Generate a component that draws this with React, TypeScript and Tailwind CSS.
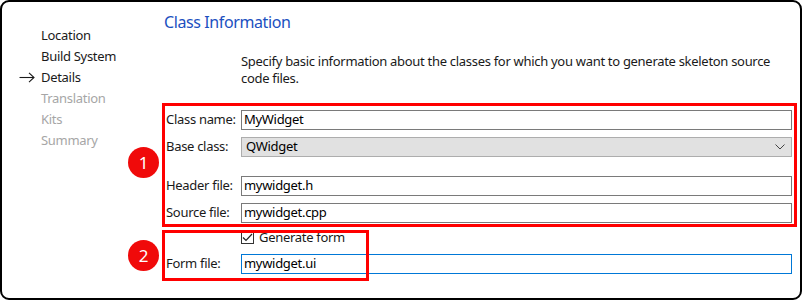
import React from 'react';

const font = { fontFamily: '"Noto Sans", "Open Sans", sans-serif' };

const steps = [
  { label: 'Location', state: 'done' },
  { label: 'Build System', state: 'done' },
  { label: 'Details', state: 'current' },
  { label: 'Translation', state: 'todo' },
  { label: 'Kits', state: 'todo' },
  { label: 'Summary', state: 'todo' },
];

function Arrow() {
  return (
    <svg width="16" height="11" viewBox="0 0 16 11" fill="none" stroke="#1a1a1a" strokeWidth="1.1">
      <path d="M0.5 5.5H15" />
      <path d="M10 0.8L15 5.5L10 10.2" />
    </svg>
  );
}

function TextField({ value, focused }: { value: string; focused?: boolean }) {
  return (
    <div
      className={`flex h-[20px] items-center border bg-white pl-[2px] text-[13px] text-black ${
        focused ? 'border-[#0078d7]' : 'border-[#7a7a7a]'
      }`}
    >
      {value}
    </div>
  );
}

function Badge({ n }: { n: number }) {
  return (
    <div className="flex h-[31px] w-[31px] items-center justify-center rounded-full bg-[#f00a0a] text-[17px] text-white">
      {n}
    </div>
  );
}

export default function App() {
  return (
    <div className="relative h-[301px] w-[802px] bg-white tracking-[-0.3px]" style={font}>
      <div className="flex h-[300px] w-[802px] rounded-[9px] border-2 border-black">
        <div className="w-[160px] pl-[17px] pt-[23px]">
          {steps.map((s) => (
            <div key={s.label} className="flex h-[21px] items-center">
              <div className="w-[22px]">{s.state === 'current' && <Arrow />}</div>
              <span
                className={`text-[13px] ${s.state === 'todo' ? 'text-[#a6a6a6]' : 'text-[#1a1a1a]'}`}
              >
                {s.label}
              </span>
            </div>
          ))}
        </div>

        <div className="flex-1 pt-[9px]">
          <div className="pl-[2px] text-[16px] leading-[22px] tracking-[-0.4px] text-[#1b50c0]">
            Class Information
          </div>
          <div className="ml-[79px] mt-[20px] text-[13px] leading-[17px] text-[#1a1a1a]">
            <div className="whitespace-nowrap">
              Specify basic information about the classes for which you want to generate skeleton source
            </div>
            <div>code files.</div>
          </div>

          <div className="mt-[16px] w-[635px] border-[3px] border-[#ff0000] pb-[1px] pl-[1px] pr-[2px] pt-[4px]">
            <div className="grid grid-cols-[75px_1fr] items-center text-[13px] text-[#1a1a1a]">
              <span>Class name:</span>
              <TextField value="MyWidget" />
            </div>
            <div className="mt-[7px] grid grid-cols-[75px_1fr] items-center text-[13px] text-[#1a1a1a]">
              <span>Base class:</span>
              <div className="flex h-[20px] items-center justify-between border border-[#adadad] bg-[#e1e1e1] pl-[4px] pr-[6px] text-black">
                QWidget
                <svg width="10" height="6" viewBox="0 0 10 6" fill="none" stroke="#444" strokeWidth="1">
                  <path d="M0.5 0.5L5 5L9.5 0.5" />
                </svg>
              </div>
            </div>
            <div className="mt-[19px] grid grid-cols-[75px_1fr] items-center text-[13px] text-[#1a1a1a]">
              <span>Header file:</span>
              <TextField value="mywidget.h" />
            </div>
            <div className="mt-[7px] grid grid-cols-[75px_1fr] items-center text-[13px] text-[#1a1a1a]">
              <span>Source file:</span>
              <TextField value="mywidget.cpp" />
            </div>
          </div>

          <div className="ml-[79px] mt-[4px] flex h-[13px] items-center gap-[5px] text-[13px] text-[#1a1a1a]">
            <div className="flex h-[13px] w-[13px] items-center justify-center border border-[#333] bg-white">
              <svg width="11" height="9" viewBox="0 0 11 9" fill="none" stroke="#222" strokeWidth="1.2">
                <path d="M1 4.5L4 7.5L10 1" />
              </svg>
            </div>
            <span>Generate form</span>
          </div>

          <div className="mt-[10px] grid w-[630px] grid-cols-[79px_1fr] items-center text-[13px] text-[#1a1a1a]">
            <span className="pl-[4px]">Form file:</span>
            <TextField value="mywidget.ui" focused />
          </div>
        </div>
      </div>

      <div className="absolute left-[162px] top-[230px] h-[51px] w-[207px] border-[3px] border-[#ff0000]" />
      <div className="absolute left-[128px] top-[147px]">
        <Badge n={1} />
      </div>
      <div className="absolute left-[128px] top-[240px]">
        <Badge n={2} />
      </div>
    </div>
  );
}
